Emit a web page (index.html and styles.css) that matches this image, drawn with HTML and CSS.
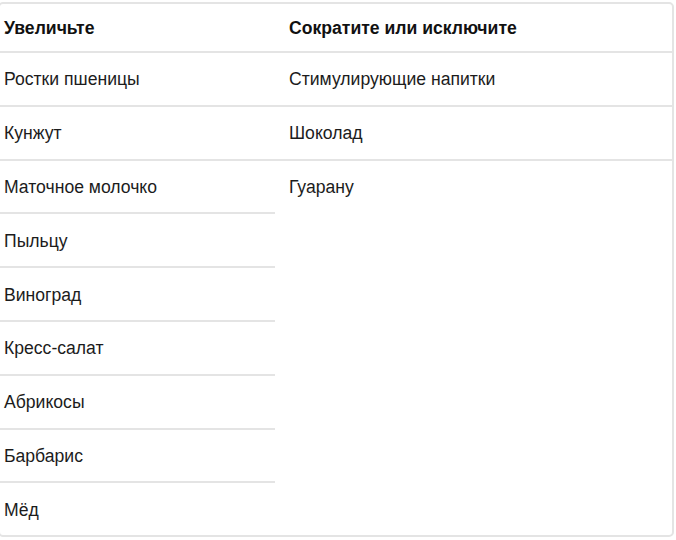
FILE: index.html
```html
<!DOCTYPE html>
<html lang="ru">
<head>
<meta charset="utf-8">
<link rel="stylesheet" href="styles.css">
</head>
<body>
<div class="table">
  <div class="col col-left">
    <div class="cell head">Увеличьте</div>
    <div class="cell">Ростки пшеницы</div>
    <div class="cell">Кунжут</div>
    <div class="cell">Маточное молочко</div>
    <div class="cell">Пыльцу</div>
    <div class="cell">Виноград</div>
    <div class="cell">Кресс-салат</div>
    <div class="cell">Абрикосы</div>
    <div class="cell">Барбарис</div>
    <div class="cell last">Мёд</div>
  </div>
  <div class="col col-right">
    <div class="cell head">Сократите или исключите</div>
    <div class="cell">Стимулирующие напитки</div>
    <div class="cell">Шоколад</div>
    <div class="cell last">Гуарану</div>
  </div>
</div>
</body>
</html>
```
FILE: styles.css
```css
html, body {
  margin: 0;
  padding: 0;
  background: #ffffff;
}
body {
  font-family: "Liberation Sans", Arial, sans-serif;
  font-size: 17.6px;
  color: #1c1c1c;
  overflow: hidden;
}
.table {
  display: flex;
  width: 676px;
  height: 535px;
  box-sizing: border-box;
  margin: 2px 0 0 -2px;
  border: 2px solid #e4e4e4;
  border-radius: 5px;
}
.col {
  display: flex;
  flex-direction: column;
}
.col-left {
  width: 275px;
}
.col-right {
  flex: 1;
}
.cell {
  height: 51.8px;
  border-bottom: 2px solid #e4e4e4;
  display: flex;
  align-items: center;
  flex-shrink: 0;
  padding-top: 2px;
  box-sizing: border-box;
}
.col-left .cell {
  padding-left: 4px;
  height: 53.8px;
}
.col-right .cell {
  padding-left: 14px;
  height: 53.8px;
}
.col .cell.head {
  height: 49px;
  font-weight: bold;
  color: #111111;
}
.col .cell.last {
  border-bottom: none;
  height: 51.8px;
}
```
